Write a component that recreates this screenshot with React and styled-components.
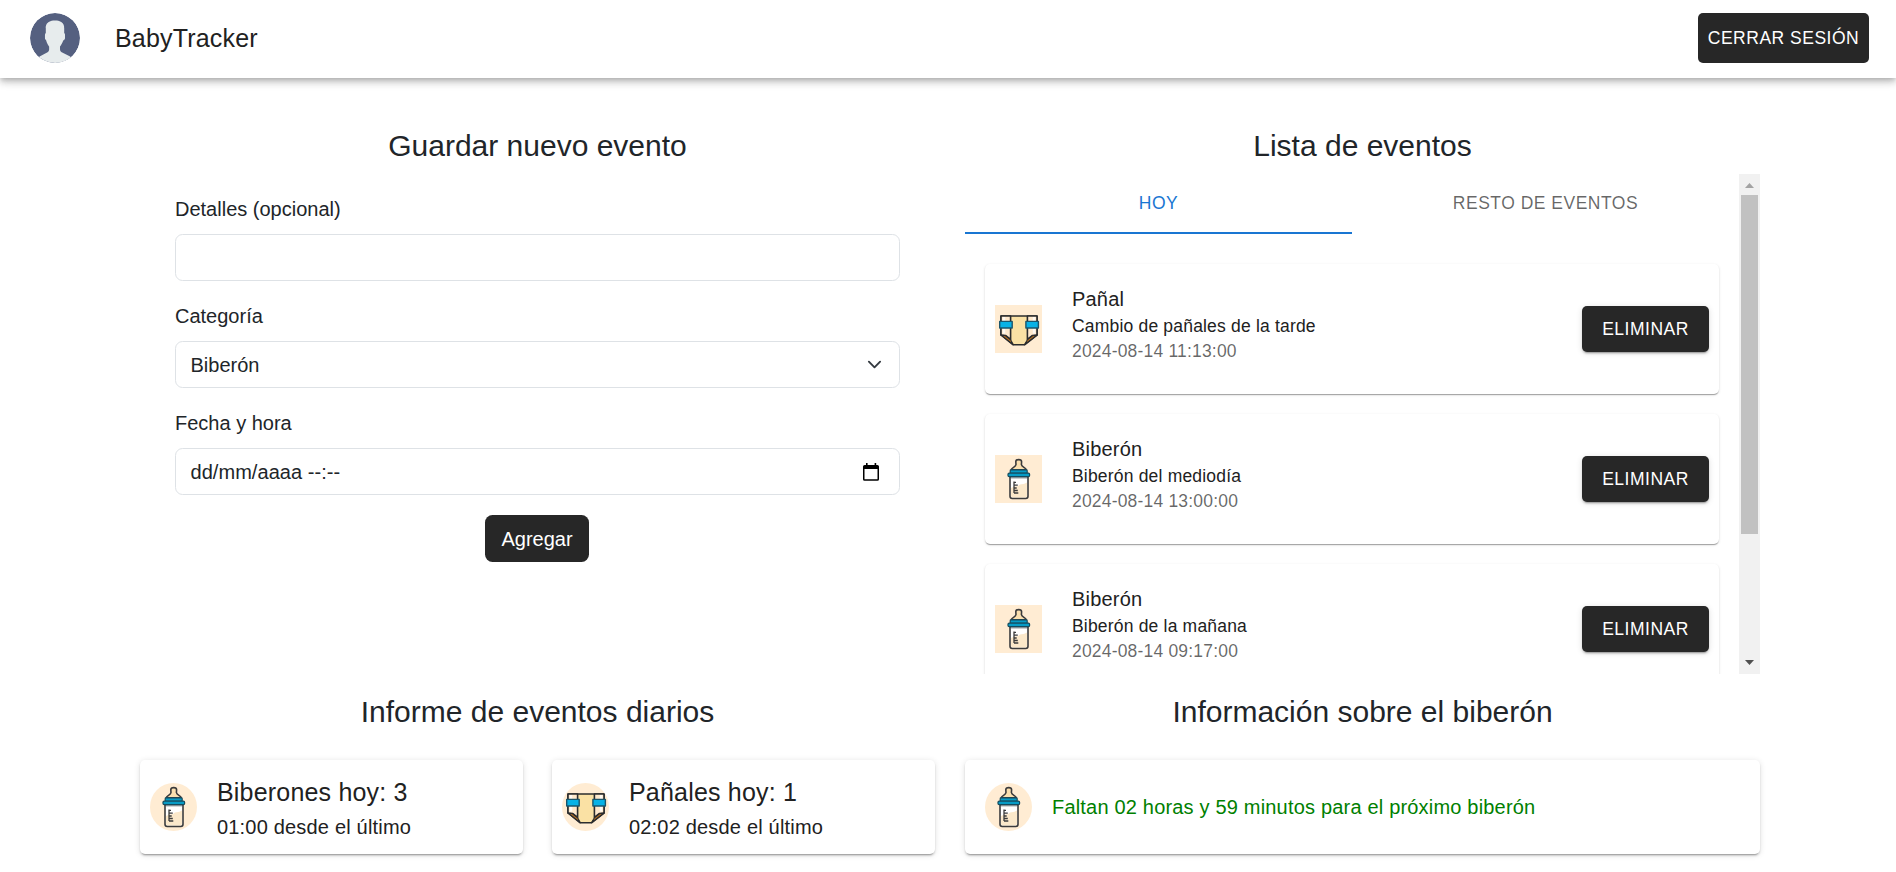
import React from 'react';
import styled, { createGlobalStyle } from 'styled-components';

const GlobalStyle = createGlobalStyle`
  *, *::before, *::after { box-sizing: border-box; }
  body {
    margin: 0;
    background: #fff;
    color: #212529;
    font: 400 20px/1.5 "Liberation Sans", Arial, sans-serif;
  }
`;

const Header = styled.header`
  display: flex;
  align-items: center;
  height: 78px;
  padding: 0 27px 2px 30px;
  background: #fff;
  box-shadow: 0 2.5px 5px -1.25px rgba(0, 0, 0, 0.2), 0 5px 6.25px rgba(0, 0, 0, 0.14),
    0 1.25px 12.5px rgba(0, 0, 0, 0.12);
`;

const Avatar = styled.svg`
  width: 50px;
  height: 50px;
  margin-right: 35px;
  border-radius: 50%;
`;

const Brand = styled.div`
  flex: 1;
  font-size: 25px;
  line-height: 40px;
  letter-spacing: 0.0075em;
  color: #212121;
`;

const Button = styled.button`
  flex: none;
  display: inline-flex;
  align-items: center;
  justify-content: center;
  width: ${(p) => p.$width}px;
  height: ${(p) => p.$height}px;
  padding: 0;
  border: 0;
  border-radius: ${(p) => (p.$plain ? 7.5 : 5)}px;
  background: #272727;
  color: #fff;
  font-family: inherit;
  font-size: ${(p) => (p.$plain ? 20 : 17.5)}px;
  line-height: 30px;
  letter-spacing: ${(p) => (p.$plain ? 0 : '0.02857em')};
  text-transform: ${(p) => (p.$plain ? 'none' : 'uppercase')};
  box-shadow: ${(p) =>
    p.$raised
      ? '0 3px 1px -2px rgba(0,0,0,.2), 0 2px 2px rgba(0,0,0,.14), 0 1px 6px rgba(0,0,0,.12)'
      : 'none'};
`;

const Main = styled.main`
  display: grid;
  grid-template-columns: 795px 795px;
  grid-template-rows: 566px auto;
  column-gap: 30px;
  min-height: 794px;
  padding: 50px 0 18px 140px;
`;

const Section = styled.section`
  min-width: 0;
`;

const Heading = styled.h2`
  margin: 0;
  font-size: 30px;
  font-weight: 400;
  line-height: 36px;
  text-align: center;
`;

const Form = styled.form`
  display: flex;
  flex-direction: column;
  align-items: center;
  gap: 20px;
  padding: 30px 35px 0;
`;

const Field = styled.label`
  display: flex;
  flex-direction: column;
  gap: 10px;
  width: 100%;
`;

const Control = styled.div`
  display: flex;
  align-items: center;
  justify-content: space-between;
  height: 47px;
  padding: 0 ${(p) => p.$right || 15}px 0 14.5px;
  border: 1px solid #dee2e6;
  border-radius: 7.5px;
`;

const DatePlaceholder = styled.span`
  letter-spacing: 0.05px;
`;

const FormActions = styled.div`
  display: flex;
  justify-content: center;
  width: 100%;
  height: 47px;
  padding-right: 1px;
`;

const Scroller = styled.div`
  display: flex;
  height: 500px;
  margin-top: 10px;
  overflow: hidden;
`;

const ScrollContent = styled.div`
  flex: 1;
`;

const Tabs = styled.div`
  display: flex;
  height: 60px;
`;

const Tab = styled.div`
  flex: 1;
  height: 60px;
  border-bottom: ${(p) => (p.$active ? '2px solid #1976d2' : '0')};
  color: ${(p) => (p.$active ? '#1976d2' : 'rgba(0,0,0,.6)')};
  font-size: 17.5px;
  line-height: 58px;
  letter-spacing: 0.02857em;
  text-align: center;
  text-transform: uppercase;
`;

const EventList = styled.div`
  display: flex;
  flex-direction: column;
  gap: 20px;
  padding: 30px 20px 0;
`;

const EventCard = styled.article`
  flex: none;
  display: flex;
  align-items: center;
  height: 130px;
  padding: 0 10px;
  border-radius: 5px;
  background: #fff;
  box-shadow: 0 2px 1px -1px rgba(0, 0, 0, 0.2), 0 1px 1px rgba(0, 0, 0, 0.14),
    0 1px 3px rgba(0, 0, 0, 0.12);
`;

const EventText = styled.div`
  flex: 1;
  height: 90px;
  margin-left: 30px;
  color: #212121;
`;

const EventName = styled.div`
  font-size: 20px;
  line-height: 30px;
  letter-spacing: 0.00938em;
`;

const EventDetail = styled.div`
  font-size: 17.5px;
  line-height: 25px;
  letter-spacing: 0.01071em;
  color: ${(p) => (p.$muted ? 'rgba(0,0,0,.6)' : '#212121')};
`;

const Scrollbar = styled.div`
  display: flex;
  flex-direction: column;
  align-items: center;
  width: 21px;
  background: #f1f1f1;
`;

const ScrollArrow = styled.svg`
  flex: none;
  width: 21px;
  height: 21px;
  fill: ${(p) => p.$color};
`;

const ScrollTrack = styled.div`
  flex: 1;
`;

const ScrollThumb = styled.div`
  width: 17px;
  height: 339px;
  background: #c1c1c1;
`;

const SummaryRow = styled.div`
  display: flex;
  gap: 29px;
  margin-top: 30px;
`;

const SummaryCard = styled.article`
  flex: 1;
  display: flex;
  align-items: center;
  gap: 20px;
  height: 94px;
  padding: 0 ${(p) => p.$inset || 10}px;
  border-radius: 5px;
  background: #fff;
  color: #212121;
  box-shadow: 0 3px 1px -2px rgba(0, 0, 0, 0.2), 0 2px 2px rgba(0, 0, 0, 0.14),
    0 1px 6px rgba(0, 0, 0, 0.12);
`;

const SummaryTitle = styled.div`
  font-size: 25px;
  line-height: 40px;
  letter-spacing: 0.0075em;
`;

const SummaryText = styled.div`
  font-size: 20px;
  line-height: 30px;
  letter-spacing: 0.00938em;
  color: ${(p) => (p.$ok ? 'green' : 'inherit')};
`;

const IconFrame = styled.svg`
  flex: none;
  width: 47px;
  height: 48px;
  background: #ffecd3;
  border-radius: ${(p) => (p.$round ? '50%' : '0')};
`;

const Glyph = styled.svg`
  flex: none;
  width: ${(p) => p.$w}px;
  height: ${(p) => p.$h}px;
`;

function DiaperIcon({ round }) {
  return (
    <IconFrame $round={round} viewBox="0 0 47 48" stroke="#2b2c2e" strokeWidth="1.6" strokeLinejoin="round">
      <path d="M6 11H42V30L29.5 39.8H18.2L6 30Z" fill="#fae1a4" />
      <path d="M6 11H15.6V34.5L10.5 30.5L6 30Z" fill="#ffe9cc" />
      <path d="M42 11H32.4V34.5L37.5 30.5L42 30Z" fill="#ffe9cc" />
      <path d="M9 12V28.5M39 12V28.5" stroke="#fffaf3" strokeWidth="2.4" />
      <path d="M6 30L10.5 30.8L15.6 34.8L18.4 39.8Z" fill="#c07420" strokeWidth="1.1" />
      <path d="M42 30L37.5 30.8L32.4 34.8L29.4 39.8Z" fill="#c07420" strokeWidth="1.1" />
      <rect x="4.7" y="16.4" width="12.5" height="6.6" fill="#08b2e6" stroke="#1b566c" strokeWidth="1.4" />
      <rect x="30.9" y="16.4" width="12.5" height="6.6" fill="#08b2e6" stroke="#1b566c" strokeWidth="1.4" />
    </IconFrame>
  );
}

function BottleIcon({ round }) {
  return (
    <IconFrame $round={round} viewBox="0 0 47 48" stroke="#3b3b3c" strokeWidth="1.6" strokeLinejoin="round">
      <path
        d="M16.2 14.8C16.8 12.4 20.8 12.2 21 9.5L20.8 6.8C20.8 3.9 26.6 3.9 26.6 6.8L26.4 9.5C26.6 12.2 30.8 12.4 31.3 14.8Z"
        fill="#fadfaf"
      />
      <path d="M15 21.8H33V41.2Q33 43.4 30.8 43.4H17.2Q15 43.4 15 41.2Z" fill="#fff" />
      <path d="M16 33Q19 31 23 31Q24.5 29.5 26 29.2Q29 29.5 32 27.5V41.1Q32 42.4 30.6 42.4H17.4Q16 42.4 16 41.1Z" fill="#fbe8ca" stroke="none" />
      <path d="M16 23H32" stroke="#a9adb0" strokeWidth="1.2" />
      <path d="M19 26.5V38M19 27.3H21M19 30.2H22.8M19 33H21.7M19 35.5H22.8M19 38H23.3" fill="none" strokeWidth="1.3" />
      <rect x="15.2" y="14.9" width="17" height="3.5" rx="0.8" fill="#079bc5" stroke="#174b5d" strokeWidth="1.2" />
      <rect x="13" y="18.1" width="21.6" height="3.5" rx="1.2" fill="#079bc5" stroke="#174b5d" strokeWidth="1.2" />
    </IconFrame>
  );
}

const ICONS = { diaper: DiaperIcon, bottle: BottleIcon };

const EVENTS = [
  { icon: 'diaper', name: 'Pañal', detail: 'Cambio de pañales de la tarde', date: '2024-08-14 11:13:00' },
  { icon: 'bottle', name: 'Biberón', detail: 'Biberón del mediodía', date: '2024-08-14 13:00:00' },
  { icon: 'bottle', name: 'Biberón', detail: 'Biberón de la mañana', date: '2024-08-14 09:17:00' },
];

function EventItem({ icon, name, detail, date }) {
  const Icon = ICONS[icon];
  return (
    <EventCard>
      <Icon />
      <EventText>
        <EventName>{name}</EventName>
        <EventDetail>{detail}</EventDetail>
        <EventDetail $muted>{date}</EventDetail>
      </EventText>
      <Button $width={127} $height={46} $raised>Eliminar</Button>
    </EventCard>
  );
}

export default function App() {
  return (
    <>
      <GlobalStyle />
      <Header>
        <Avatar viewBox="0 0 53 53">
          <circle cx="26.5" cy="26.5" r="26.5" fill="#556080" />
          <path
            fill="#e7eced"
            d="M18.613,41.552l-7.907,4.313c-0.464,0.253-0.881,0.564-1.269,0.903C14.047,50.655,19.998,53,26.5,53c6.454,0,12.367-2.31,16.964-6.144c-0.424-0.358-0.884-0.68-1.394-0.934l-8.467-4.233c-1.094-0.547-1.785-1.665-1.785-2.888v-3.322c0.238-0.271,0.51-0.619,0.801-1.03c1.154-1.63,2.027-3.423,2.632-5.304c1.086-0.335,1.886-1.338,1.886-2.53v-3.546c0-0.78-0.347-1.477-0.886-1.965v-5.126c0,0,1.053-7.977-9.75-7.977s-9.75,7.977-9.75,7.977v5.126c-0.54,0.488-0.886,1.185-0.886,1.965v3.546c0,0.934,0.491,1.756,1.226,2.231c0.886,3.857,3.206,6.633,3.206,6.633v3.24C20.296,39.899,19.65,40.986,18.613,41.552z"
          />
        </Avatar>
        <Brand>BabyTracker</Brand>
        <Button $width={171} $height={50}>Cerrar sesión</Button>
      </Header>

      <Main>
        <Section>
          <Heading>Guardar nuevo evento</Heading>
          <Form>
            <Field>
              Detalles (opcional)
              <Control />
            </Field>
            <Field>
              Categoría
              <Control $right={17.5}>
                Biberón
                <Glyph $w={15} $h={15} viewBox="0 0 16 16" fill="none" stroke="#343a40" strokeWidth="2" strokeLinecap="round" strokeLinejoin="round">
                  <path d="m2 5 6 6 6-6" />
                </Glyph>
              </Control>
            </Field>
            <Field>
              Fecha y hora
              <Control $right={20}>
                <DatePlaceholder>dd/mm/aaaa --:--</DatePlaceholder>
                <Glyph $w={16} $h={18} viewBox="0 0 16 18">
                  <path d="M3 0H4.6V2H11.6V0H13.2V2H14.4Q16 2 16 3.6V16.2Q16 17.8 14.4 17.8H1.6Q0 17.8 0 16.2V3.6Q0 2 1.6 2H3ZM1.5 6V16.2H14.5V6Z" fillRule="evenodd" />
                </Glyph>
              </Control>
            </Field>
            <FormActions>
              <Button type="button" $width={104} $height={47} $plain>Agregar</Button>
            </FormActions>
          </Form>
        </Section>

        <Section>
          <Heading>Lista de eventos</Heading>
          <Scroller>
            <ScrollContent>
              <Tabs>
                <Tab $active>Hoy</Tab>
                <Tab>Resto de eventos</Tab>
              </Tabs>
              <EventList>
                {EVENTS.map((e) => (
                  <EventItem key={e.date} {...e} />
                ))}
              </EventList>
            </ScrollContent>
            <Scrollbar>
              <ScrollArrow $color="#a3a3a3" viewBox="0 0 21 21">
                <path d="M6 14L10.5 9L15 14Z" />
              </ScrollArrow>
              <ScrollTrack>
                <ScrollThumb />
              </ScrollTrack>
              <ScrollArrow $color="#505050" viewBox="0 0 21 21">
                <path d="M6 7H15L10.5 12Z" />
              </ScrollArrow>
            </Scrollbar>
          </Scroller>
        </Section>

        <Section>
          <Heading>Informe de eventos diarios</Heading>
          <SummaryRow>
            <SummaryCard>
              <BottleIcon round />
              <div>
                <SummaryTitle>Biberones hoy: 3</SummaryTitle>
                <SummaryText>01:00 desde el último</SummaryText>
              </div>
            </SummaryCard>
            <SummaryCard>
              <DiaperIcon round />
              <div>
                <SummaryTitle>Pañales hoy: 1</SummaryTitle>
                <SummaryText>02:02 desde el último</SummaryText>
              </div>
            </SummaryCard>
          </SummaryRow>
        </Section>

        <Section>
          <Heading>Información sobre el biberón</Heading>
          <SummaryRow>
            <SummaryCard $inset={20}>
              <BottleIcon round />
              <SummaryText $ok>Faltan 02 horas y 59 minutos para el próximo biberón</SummaryText>
            </SummaryCard>
          </SummaryRow>
        </Section>
      </Main>
    </>
  );
}
